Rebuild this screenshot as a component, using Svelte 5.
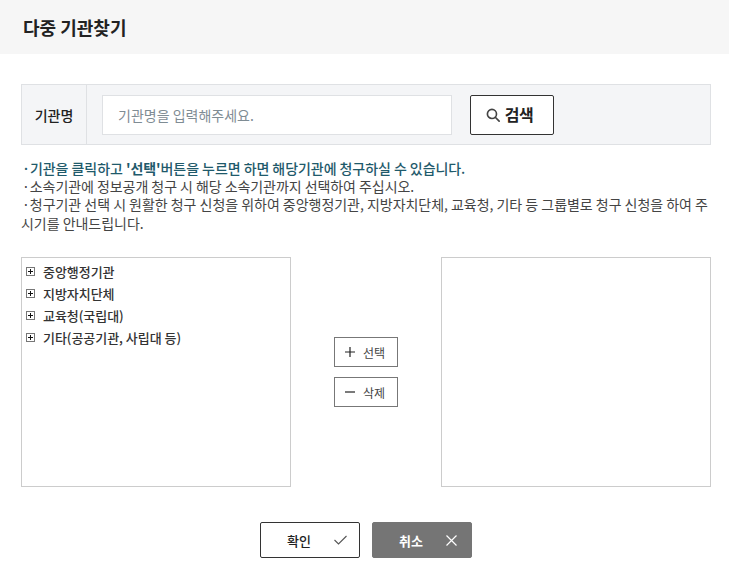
<script>
  const tree = ['중앙행정기관', '지방자치단체', '교육청(국립대)', '기타(공공기관, 사립대 등)']
</script>

<div class="page">
  <header class="head"><h1>다중 기관찾기</h1></header>

  <div class="body">
    <div class="search">
      <div class="search-label">기관명</div>
      <div class="search-field">
        <input type="text" placeholder="기관명을 입력해주세요." />
        <button class="search-btn">
          <svg width="14" height="14" viewBox="0 0 16 16" fill="none" stroke="#444" stroke-width="1.9">
            <circle cx="6.8" cy="6.8" r="5.2" />
            <path d="M10.6 10.6 L15 15" stroke-linecap="round" />
          </svg>
          <span>검색</span>
        </button>
      </div>
    </div>

    <div class="notes">
      <p class="strong">·기관을 클릭하고 <b>'선택'</b>버튼을 누르면 하면 해당기관에 청구하실 수 있습니다.</p>
      <p>·소속기관에 정보공개 청구 시 해당 소속기관까지 선택하여 주십시오.</p>
      <p>·청구기관 선택 시 원활한 청구 신청을 위하여 중앙행정기관, 지방자치단체, 교육청, 기타 등 그룹별로 청구 신청을 하여 주시기를 안내드립니다.</p>
    </div>

    <div class="picker">
      <ul class="box tree">
        {#each tree as item}
          <li>
            <svg class="plus" width="9" height="9" viewBox="0 0 9 9">
              <rect x="0.5" y="0.5" width="8" height="8" fill="#fff" stroke="#777" />
              <path d="M2 4.5 H7 M4.5 2 V7" stroke="#111" />
            </svg>
            <span>{item}</span>
          </li>
        {/each}
      </ul>

      <div class="actions">
        <button class="mini">
          <svg width="10" height="10" viewBox="0 0 10 10"><path d="M0 5 H10 M5 0 V10" stroke="#222" stroke-width="1.2" /></svg>
          선택
        </button>
        <button class="mini">
          <svg width="10" height="10" viewBox="0 0 10 10"><path d="M0 5 H10" stroke="#222" stroke-width="1.2" /></svg>
          삭제
        </button>
      </div>

      <div class="box"></div>
    </div>

    <div class="footer">
      <button class="foot ok">
        <span>확인</span>
        <svg width="13" height="10" viewBox="0 0 13 10" fill="none"><path d="M0.5 5 L4.5 9 L12.5 1" stroke="#555" stroke-width="1.1" /></svg>
      </button>
      <button class="foot cancel">
        <span>취소</span>
        <svg width="11" height="11" viewBox="0 0 11 11" fill="none"><path d="M0.5 0.5 L10.5 10.5 M10.5 0.5 L0.5 10.5" stroke="#fff" stroke-width="1.2" /></svg>
      </button>
    </div>
  </div>
</div>

<style>
  :global(body) {
    margin: 0;
    background: #fff;
  }
  .page {
    width: 729px;
    height: 584px;
    overflow: hidden;
    font-family: "Noto Sans CJK KR", "Noto Sans", sans-serif;
    color: #333;
  }
  button {
    font-family: inherit;
    padding: 0;
    cursor: pointer;
  }
  .head {
    height: 54px;
    background: #f6f6f6;
    display: flex;
    align-items: center;
    padding-left: 23px;
  }
  h1 {
    margin: 0;
    font-size: 18px;
    font-weight: 700;
    color: #222;
  }
  .body {
    padding: 30px 18px 0 21px;
  }
  .search {
    display: flex;
    height: 61px;
    box-sizing: border-box;
    border: 1px solid #dfe1e4;
    background: #f4f5f7;
  }
  .search-label {
    width: 65px;
    box-sizing: border-box;
    border-right: 1px solid #dfe1e4;
    display: flex;
    align-items: center;
    justify-content: center;
    font-size: 14px;
    font-weight: 500;
    color: #222;
  }
  .search-field {
    display: flex;
    align-items: center;
    gap: 18px;
    padding-left: 15px;
  }
  input {
    width: 350px;
    height: 40px;
    box-sizing: border-box;
    border: 1px solid #dfe1e4;
    background: #fff;
    padding: 0 15px;
    font-family: inherit;
    font-size: 14px;
    outline: none;
  }
  input::placeholder {
    color: #7f8c94;
    opacity: 1;
  }
  .search-btn {
    width: 84px;
    height: 40px;
    box-sizing: border-box;
    border: 1px solid #333;
    border-radius: 2px;
    background: #fff;
    display: flex;
    align-items: center;
    justify-content: center;
    gap: 5px;
    padding-right: 5px;
    font-size: 16px;
    font-weight: 700;
    letter-spacing: -0.5px;
    color: #222;
  }
  .search-btn span {
    line-height: 20px;
    margin-top: -2px;
  }
  .notes {
    margin-top: 15px;
    font-size: 14px;
    line-height: 18px;
    letter-spacing: -0.06px;
    color: #444;
  }
  .notes p {
    margin: 0;
    text-indent: 1px;
  }
  .notes p.strong {
    line-height: 17px;
  }
  .notes p:last-child {
    line-height: 19px;
    letter-spacing: -0.03px;
  }
  .strong {
    color: #1f5a6b;
    font-weight: 500;
  }
  .strong b {
    font-weight: 700;
  }
  .picker {
    margin-top: 24px;
    display: flex;
  }
  .box {
    width: 270px;
    height: 230px;
    box-sizing: border-box;
    border: 1px solid #ccc;
    margin: 0;
  }
  .tree {
    list-style: none;
    padding: 2px 0 0 4px;
  }
  .tree li {
    height: 22px;
    display: flex;
    align-items: center;
    gap: 8px;
    font-size: 13px;
    font-weight: 500;
    letter-spacing: -0.04px;
    color: #333;
  }
  .actions {
    width: 150px;
    padding: 80px 0 0 43px;
    box-sizing: border-box;
    display: flex;
    flex-direction: column;
    gap: 10px;
  }
  .mini {
    width: 64px;
    height: 30px;
    box-sizing: border-box;
    border: 1px solid #777;
    background: #fff;
    display: flex;
    align-items: center;
    justify-content: center;
    gap: 8px;
    padding-right: 2px;
    font-size: 12px;
    color: #444;
  }
  .footer {
    margin-top: 35px;
    display: flex;
    justify-content: center;
    gap: 12px;
  }
  .foot {
    width: 100px;
    height: 36px;
    box-sizing: border-box;
    border-radius: 2px;
    display: flex;
    align-items: center;
    justify-content: space-between;
    padding: 0 12px 0 26px;
    font-size: 13px;
    font-weight: 500;
  }
  .ok {
    border: 1px solid #333;
    background: #fff;
    color: #222;
  }
  .cancel {
    border: 1px solid #757575;
    background: #757575;
    color: #fff;
    font-weight: 700;
    padding-right: 14px;
  }
</style>
